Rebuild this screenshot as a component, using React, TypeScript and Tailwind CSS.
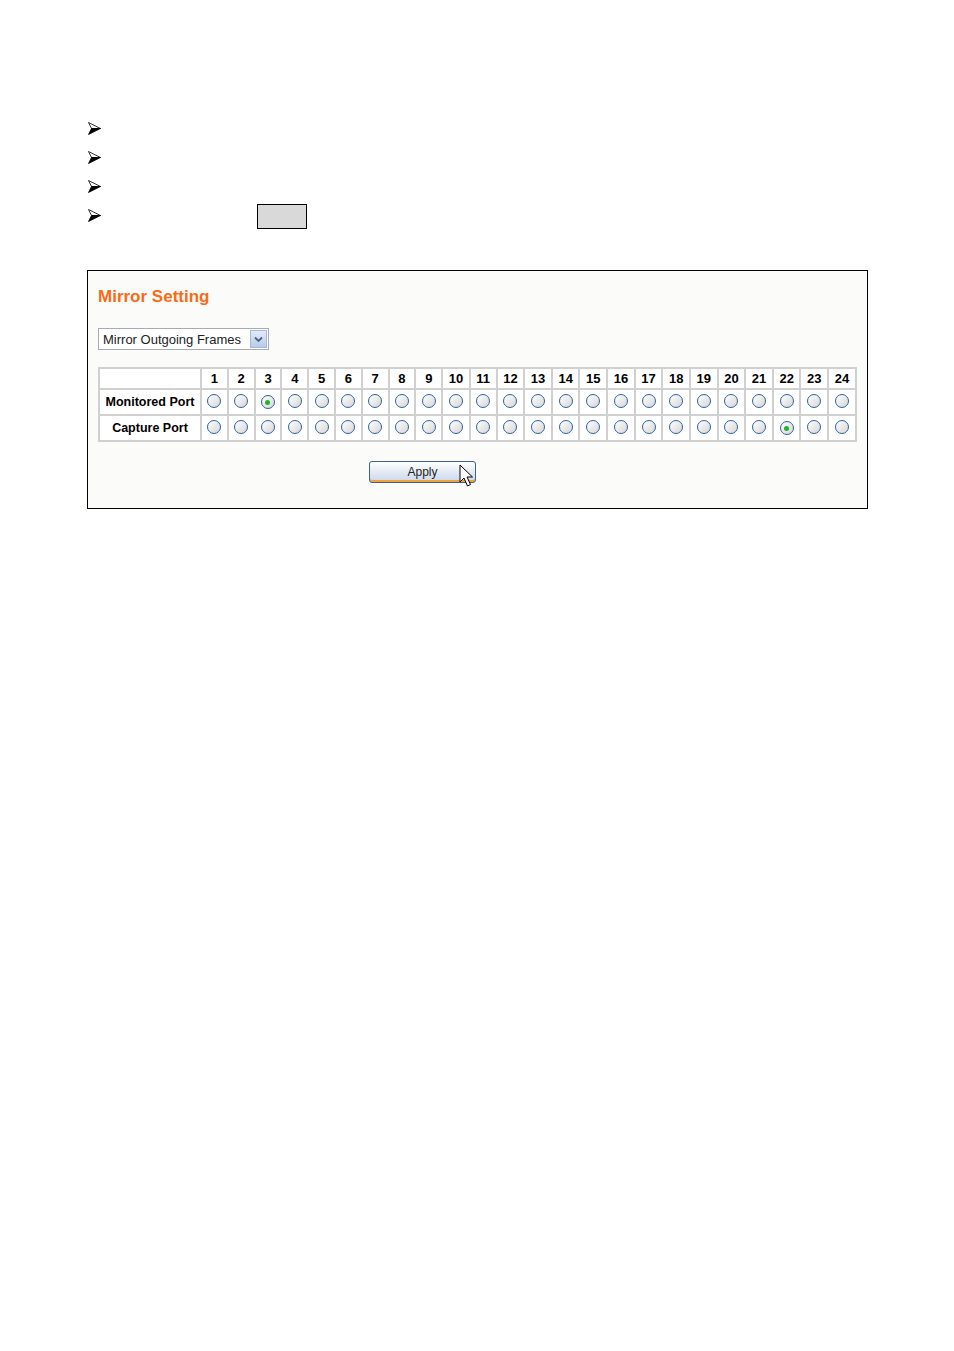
import React from 'react'

const ports = Array.from({ length: 24 }, (_, i) => i + 1)

function Bullet() {
  return (
    <svg width="13" height="13" viewBox="0 0 13 13" className="block">
      <polygon points="0.5,0.5 12.5,6.5 3.5,6.5" fill="#fff" stroke="#000" strokeWidth="0.8" />
      <polygon points="0.5,12.5 12.5,6.5 3.5,6.5" fill="#000" stroke="#000" strokeWidth="0.8" />
    </svg>
  )
}

function Radio({ checked }: { checked?: boolean }) {
  return (
    <span className="inline-flex items-center justify-center w-[14px] h-[14px] rounded-full border-[1.5px] border-[#2f62a0] bg-gradient-to-br from-white to-[#d6d6d6]">
      {checked && <span className="w-[5px] h-[5px] rounded-full bg-[#21b32c]" />}
    </span>
  )
}

function Cursor() {
  return (
    <svg width="16" height="26" viewBox="0 0 16 26" className="absolute left-[90px] top-[5px]">
      <path d="M1 1 L1 18 L5 14 L8.5 22 L11.5 20.5 L8 13 L13.5 13 Z" fill="#fff" stroke="#000" strokeWidth="1" />
    </svg>
  )
}

export default function App() {
  const font = { fontFamily: '"Liberation Sans", Arial, sans-serif' }
  return (
    <div className="w-[954px] h-[1351px] bg-white" style={font}>
      <div className="pt-[122px] pl-[88px] flex flex-col gap-[16px]">
        <div className="h-[13px]"><Bullet /></div>
        <div className="h-[13px]"><Bullet /></div>
        <div className="h-[13px]"><Bullet /></div>
        <div className="h-[13px] relative">
          <Bullet />
          <div className="absolute left-[169px] top-[-5px] w-[50px] h-[25px] bg-[#d9d9d9] border border-black" />
        </div>
      </div>

      <div className="ml-[87px] mt-[48px] w-[781px] h-[239px] border border-black bg-[#fbfcf9] pl-[10px] pt-[15px]">
        <div className="text-[17px] font-bold text-[#f96a17] leading-[22px]">Mirror Setting</div>

        <div className="mt-[20px] flex w-[171px] h-[22px] border border-[#a5acb5] bg-white items-center">
          <span className="flex-1 pl-[4px] text-[13px] text-[#222] leading-none">Mirror Outgoing Frames</span>
          <span className="w-[17px] h-[18px] mr-[1px] flex items-center justify-center border border-[#a7b8d6] bg-gradient-to-b from-[#e3ebf8] to-[#b8cbe9]">
            <svg width="9" height="7" viewBox="0 0 9 7">
              <path d="M1 1.5 L4.5 5 L8 1.5" fill="none" stroke="#4d6185" strokeWidth="1.8" />
            </svg>
          </span>
        </div>

        <table className="mt-[17px] w-[759px] border-separate border-spacing-[2px] bg-[#d0d0d0] text-[12.5px] font-bold text-black">
          <tbody>
            <tr className="h-[19px]">
              <td className="w-[100px] bg-white" />
              {ports.map((p) => (
                <td key={p} className="bg-white text-center leading-none text-[13px]">{p}</td>
              ))}
            </tr>
            <tr className="h-[24px]">
              <td className="bg-white text-center leading-none">Monitored Port</td>
              {ports.map((p) => (
                <td key={p} className="bg-white text-center align-middle leading-none">
                  <Radio checked={p === 3} />
                </td>
              ))}
            </tr>
            <tr className="h-[24px]">
              <td className="bg-white text-center leading-none">Capture Port</td>
              {ports.map((p) => (
                <td key={p} className="bg-white text-center align-middle leading-none">
                  <Radio checked={p === 22} />
                </td>
              ))}
            </tr>
          </tbody>
        </table>

        <div className="mt-[17px] ml-[271px] relative w-[107px] h-[22px]">
          <button className="w-[107px] h-[22px] rounded-[3px] border border-[#3f5f8c] bg-gradient-to-b from-white to-[#c9d6ea] shadow-[inset_0_-2px_0_#f0a33a,inset_0_1px_0_#fff] text-[12px] text-[#222] leading-none" style={font}>
            Apply
          </button>
          <Cursor />
        </div>
      </div>
    </div>
  )
}
